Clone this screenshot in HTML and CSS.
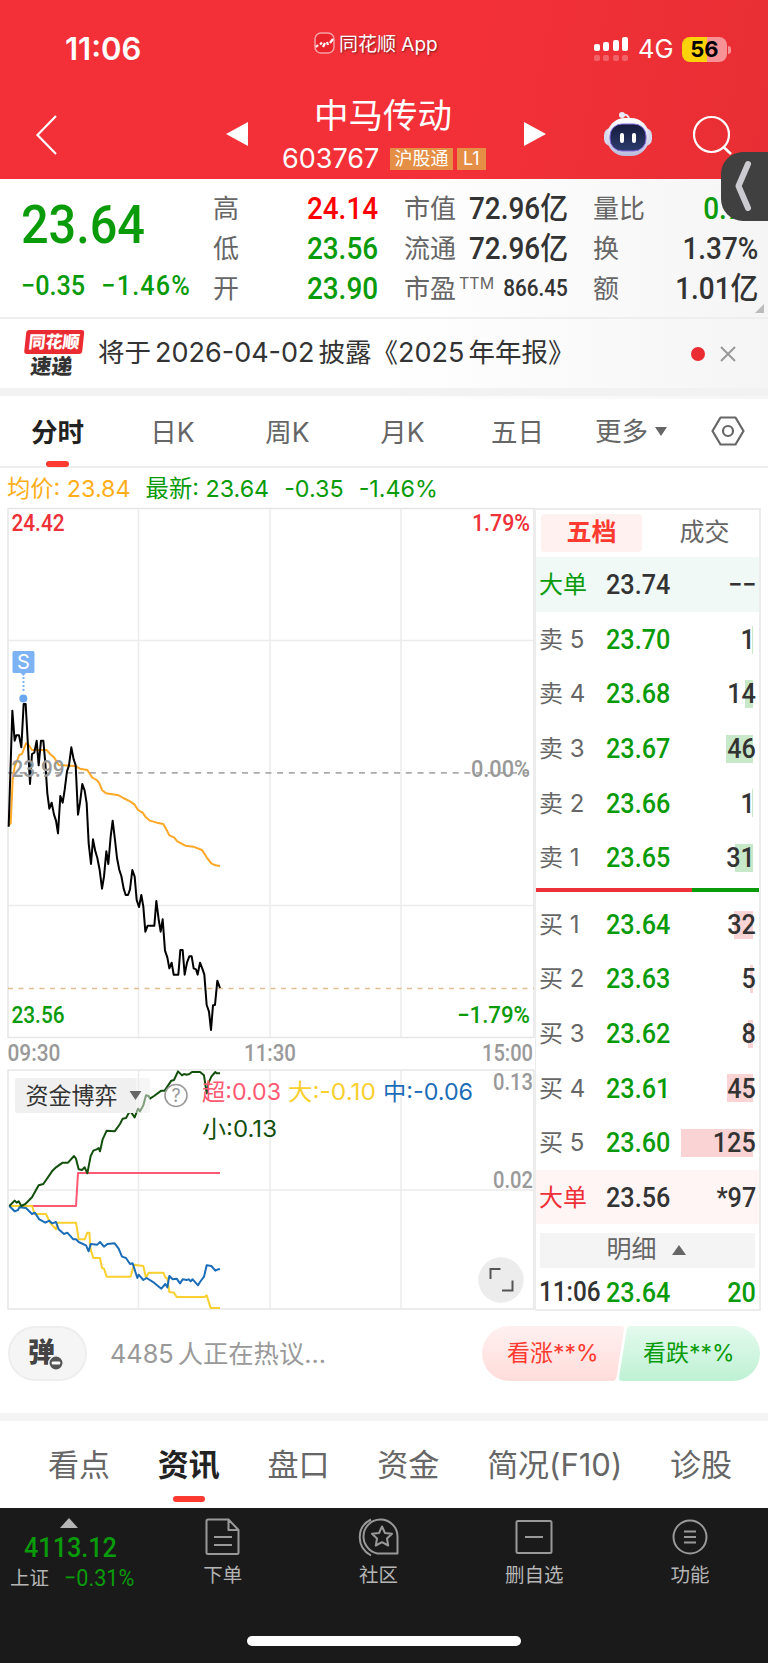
FILE: index.html
```html
<!DOCTYPE html>
<html lang="zh-CN">
<head>
    <meta charset="UTF-8">
    <title>中马传动 603767</title>
    <link rel="stylesheet" href="styles.css">
</head>
<body>
<div class="app">
    <!-- 顶部 -->
    <div class="header">
        <div class="status">
            <span class="time">11:06</span>
            <div class="brand">
                <svg width="21" height="22" viewBox="0 0 21 22"><rect x="1" y="1" width="19" height="20" rx="6" fill="#e8232b" stroke="#f6a0a3" stroke-width="1.5"/><path d="M2 15l2-2M6 12.500l2-2M9 15l2-4M13 10l1 3M16 11l3-4" stroke="#fff" stroke-width="2.200" fill="none"/></svg>
                <span>同花顺 App</span>
            </div>
            <div class="net">
                <svg width="35" height="26" viewBox="0 0 35 26">
                    <g fill="#fff"><rect x="0" y="8" width="6" height="7" rx="2"/><rect x="9" y="6" width="6" height="9" rx="2"/><rect x="19" y="4" width="6" height="11" rx="2"/><rect x="28" y="1" width="6" height="14" rx="2"/></g>
                    <g fill="#fff" opacity=".25"><rect x="0" y="19" width="6" height="6" rx="2"/><rect x="9" y="19" width="6" height="6" rx="2"/><rect x="19" y="19" width="6" height="6" rx="2"/><rect x="28" y="19" width="6" height="6" rx="2"/></g>
                </svg>
                <span class="g4">4G</span>
                <span class="battery">56</span>
            </div>
        </div>
        <div class="nav">
            <svg class="back" width="24" height="42" viewBox="0 0 24 42"><path d="M21 2L2.500 21L21 40" fill="none" stroke="#fff" stroke-width="2.200"/></svg>
            <i class="tri-left"></i>
            <div class="stock">
                <h1>中马传动</h1>
                <div class="code"><span>603767</span><b>沪股通</b><b>L1</b></div>
            </div>
            <i class="tri-right"></i>
            <svg class="robot" width="50" height="46" viewBox="0 0 50 46">
                <defs>
                    <linearGradient id="head" x1="0" y1="0" x2="0" y2="1"><stop offset="0" stop-color="#fff"/><stop offset="1" stop-color="#b9bddd"/></linearGradient>
                    <linearGradient id="face" x1="0" y1="0" x2="0" y2="1"><stop offset="0" stop-color="#141a3c"/><stop offset="1" stop-color="#2c3c6c"/></linearGradient>
                </defs>
                <path d="M20 4q6-1 6 5" fill="none" stroke="#e6e8f6" stroke-width="2"/>
                <circle cx="19" cy="4" r="3" fill="#e9eaf8"/>
                <rect x="1" y="17" width="48" height="18" rx="7" fill="#d5d8ee"/>
                <rect x="4" y="7" width="42" height="38" rx="18" fill="url(#head)"/>
                <rect x="7" y="13" width="36" height="27" rx="12" fill="url(#face)" stroke="#8a6be0" stroke-width="1"/>
                <rect x="17" y="22" width="4" height="10" rx="2" fill="#fff"/><rect x="29" y="22" width="4" height="10" rx="2" fill="#fff"/>
            </svg>
            <svg class="search" width="41" height="41" viewBox="0 0 41 41"><circle cx="19.500" cy="19.500" r="17.500" fill="none" stroke="#fff" stroke-width="2.200"/><path d="M31.500 32L39 39" stroke="#fff" stroke-width="2.600"/></svg>
        </div>
    </div>
    <div class="drawer"><svg width="47" height="69" viewBox="0 0 47 69"><path d="M27 12L17.500 34L27 56" fill="none" stroke="#cbcbd1" stroke-width="6" stroke-linecap="round" stroke-linejoin="round"/></svg></div>

    <!-- 行情 -->
    <div class="quote">
        <div class="price">
            <strong class="din">23.64</strong>
            <p class="din"><span>−0.35</span><span class="pct">−1.46%</span></p>
        </div>
        <dl class="c1">
            <dt>高</dt><dd class="din up">24.14</dd>
            <dt>低</dt><dd class="din down">23.56</dd>
            <dt>开</dt><dd class="din down">23.90</dd>
        </dl>
        <dl class="c2">
            <dt>市值</dt><dd class="din">72.96亿</dd>
            <dt>流通</dt><dd class="din">72.96亿</dd>
            <dt>市盈<sup>TTM</sup></dt><dd class="din small">866.45</dd>
        </dl>
        <dl class="c3">
            <dt>量比</dt><dd class="din down">0.78</dd>
            <dt>换</dt><dd class="din">1.37%</dd>
            <dt>额</dt><dd class="din">1.01亿</dd>
        </dl>
        <i class="corner"></i>
    </div>

    <!-- 速递 -->
    <div class="notice">
        <div class="badge"><em>同花顺</em><span>速递</span></div>
        <p>将于<span>2026-04-02</span>披露《<span class="y">2025</span>年年报》</p>
        <i class="dot"></i>
        <svg width="16" height="16" viewBox="0 0 16 16"><path d="M1 1L15 15M15 1L1 15" stroke="#999" stroke-width="2"/></svg>
    </div>

    <ul class="period">
        <li class="current">分时</li>
        <li>日K</li>
        <li>周K</li>
        <li>月K</li>
        <li>五日</li>
        <li class="more">更多<i></i></li>
        <li class="set"><svg width="34" height="30" viewBox="0 0 34 30"><path d="M9.500 1.500h15L32.500 15l-8 13.500h-15L1.500 15z" fill="none" stroke="#666" stroke-width="2.200" stroke-linejoin="round"/><circle cx="17" cy="15" r="5" fill="none" stroke="#666" stroke-width="2.200"/></svg></li>
    </ul>

    <div class="legend"><span class="avg">均价: 23.84</span><span class="last">最新: 23.64</span><span>-0.35</span><span>-1.46%</span></div>

    <div class="main">
        <!-- 分时图 -->
        <svg class="chart" width="535" height="803" viewBox="0 508 535 803">
            <g stroke="#ececec" stroke-width="1.500" fill="none">
                <path d="M8 640.500H534M8 905.500H534M138.500 509V1037M270 509V1037M401 509V1037"/>
                <path d="M8 1190H534M138.500 1070V1309M270 1070V1309M401 1070V1309"/>
                <path stroke="#e6e6e6" d="M8 508.500H534V1037.500H8zM8 1070H534V1309H8z"/>
            </g>
            <path d="M8 772.800H534" stroke="#aaa" stroke-width="1.800" stroke-dasharray="6 5.700"/>
            <path d="M8 988.600H534" stroke="#e2bd90" stroke-width="1.500" stroke-dasharray="5 5.500"/>
            <g transform="translate(0 500) scale(.33333)" fill="none" stroke-width="6" stroke-linejoin="round">
                <polyline stroke="#ffa726" points="26,976 32,970 38,840 44,800 58,765 66,762 78,730 86,735 96,750 140,750 150,762 162,772 176,795 225,798 240,806 262,810 276,832 290,840 298,850 306,870 318,880 356,886 370,894 390,904 404,914 414,930 428,938 436,950 450,962 470,968 490,972 500,990 508,1006 522,1012 532,1024 556,1037 580,1040 606,1050 620,1072 634,1090 646,1096 660,1098"/>
                <polyline stroke="#000" points="26,980 33,760 37,632 44,722 49,706 57,706 64,742 71,612 77,612 83,720 90,852 96,762 103,758 110,722 116,796 123,722 130,722 136,790 142,880 148,926 155,908 162,944 168,962 174,1000 181,888 188,908 194,870 201,814 207,796 214,742 221,778 227,796 234,944 240,908 247,852 254,872 260,910 266,1030 273,1092 279,1018 286,1054 292,1074 299,1110 306,1166 312,1130 319,1054 325,1092 332,1010 338,962 345,1020 351,1074 358,1110 364,1128 371,1166 377,1185 384,1185 390,1168 397,1110 404,1130 410,1200 417,1221 424,1185 430,1220 436,1295 443,1277 463,1277 469,1203 476,1258 482,1295 488,1258 495,1352 502,1372 508,1405 515,1388 521,1424 535,1424 541,1350 548,1350 554,1424 561,1388 568,1369 575,1369 581,1405 588,1408 593,1424 600,1388 607,1406 613,1424 620,1515 627,1535 633,1590 639,1516 645,1515 652,1442 660,1464"/>
            </g>
            <!-- 卖点标记 -->
            <path d="M14 651h19q1.500 0 1.500 1.500v19q0 1.500-1.500 1.500h-7l-2.700 3-2.700-3h-6.600q-1.500 0-1.500-1.500v-19q0-1.500 1.500-1.500z" fill="#7db3f5"/>
            <text x="23.500" y="669" text-anchor="middle" font-size="20" fill="#fff">S</text>
            <path d="M23.500 677v15" stroke="#7db3f5" stroke-width="2" stroke-dasharray="2 2"/>
            <circle cx="23.300" cy="698.500" r="4" fill="#6aa6f2"/>

            <g class="num" font-size="23">
                <text x="11.500" y="530.500" fill="#ee3038" textLength="53" lengthAdjust="spacingAndGlyphs">24.42</text>
                <text x="472" y="530.500" fill="#ee3038" textLength="58" lengthAdjust="spacingAndGlyphs">1.79%</text>
                <text x="11.500" y="776.500" fill="#999" textLength="53" lengthAdjust="spacingAndGlyphs">23.99</text>
                <text x="471" y="776.500" fill="#999" textLength="59" lengthAdjust="spacingAndGlyphs">0.00%</text>
                <text x="11.500" y="1023" fill="#0a9b0a" textLength="53" lengthAdjust="spacingAndGlyphs">23.56</text>
                <text x="457" y="1023" fill="#0a9b0a" textLength="73" lengthAdjust="spacingAndGlyphs">−1.79%</text>
            </g>
            <g class="num" font-size="23" fill="#999">
                <text x="7.500" y="1060.500" textLength="53" lengthAdjust="spacingAndGlyphs">09:30</text>
                <text x="244" y="1060.500" textLength="52" lengthAdjust="spacingAndGlyphs">11:30</text>
                <text x="482" y="1060.500" textLength="51" lengthAdjust="spacingAndGlyphs">15:00</text>
                <text x="493" y="1089.500" textLength="40" lengthAdjust="spacingAndGlyphs">0.13</text>
                <text x="493" y="1188" textLength="40" lengthAdjust="spacingAndGlyphs">0.02</text>
            </g>

            <!-- 资金博弈 -->
            <g transform="translate(0 1030) scale(.33333)" fill="none" stroke-width="6" stroke-linejoin="round">
                <polyline stroke="#ff5a73" points="28,528 228,528 234,429 660,429"/>
                <polyline stroke="#f9d02f" points="28,528 96,528 104,552 138,552 150,578 168,598 172,578 228,578 236,628 254,628 262,608 268,608 272,658 280,684 300,684 306,714 312,716 320,740 392,740 402,704 430,708 438,744 446,728 490,728 496,742 502,746 508,786 522,788 530,801 614,801 620,796 632,834 660,834"/>
                <polyline stroke="#1b6db8" points="28,528 44,544 54,540 58,532 78,534 96,552 104,548 118,568 136,578 148,572 156,580 168,576 176,598 192,612 202,608 220,628 228,628 236,636 258,646 266,664 272,642 292,644 300,636 312,650 322,642 344,640 356,656 366,680 378,684 390,702 398,700 412,744 416,734 430,750 440,744 462,758 484,776 496,762 502,772 508,738 518,748 530,746 540,760 548,748 560,750 566,748 572,754 578,748 594,766 600,756 612,740 620,706 634,708 646,722 654,718 660,718"/>
                <polyline stroke="#124f0c" points="28,528 44,512 50,518 56,514 64,528 76,522 96,502 116,466 130,462 156,424 168,412 188,398 204,398 222,378 228,386 236,418 246,420 254,412 262,430 272,378 280,362 290,358 296,354 300,364 308,328 320,302 344,304 360,282 368,266 378,264 388,246 394,248 404,262 410,246 414,236 420,244 430,226 438,196 446,198 450,206 462,198 484,182 494,182 506,164 514,152 522,150 534,124 546,136 552,132 560,134 568,132 576,126 600,126 612,136 620,190 626,158 634,140 646,126 650,130 660,130"/>
            </g>
            <rect x="15" y="1078" width="135" height="35" rx="3" fill="#eee" fill-opacity=".5"/>
            <rect x="15" y="1078" width="121" height="35" rx="3" fill="#f0f0f0"/>
            <text x="25.500" y="1104" font-size="23" fill="#333" textLength="92" lengthAdjust="spacingAndGlyphs">资金博弈</text>
            <path d="M129.500 1091h12l-6 9z" fill="#666"/>
            <circle cx="176" cy="1095.500" r="11" fill="#fff" fill-opacity=".5" stroke="#999" stroke-width="1.600"/>
            <text x="176" y="1102" font-size="18" fill="#999" text-anchor="middle">?</text>
            <g font-size="23">
                <text x="202" y="1100" fill="#ff5a73" textLength="79" lengthAdjust="spacingAndGlyphs">超:0.03</text>
                <text x="288" y="1100" fill="#f9d02f" textLength="88" lengthAdjust="spacingAndGlyphs">大:-0.10</text>
                <text x="383" y="1100" fill="#1b6db8" textLength="90" lengthAdjust="spacingAndGlyphs">中:-0.06</text>
                <text x="202" y="1137" fill="#124f0c" textLength="75" lengthAdjust="spacingAndGlyphs">小:0.13</text>
            </g>
            <circle cx="501" cy="1280" r="22.700" fill="#ececec"/>
            <path d="M490.500 1279v-10h10M502 1290.500h10.500v-10" fill="none" stroke="#555" stroke-width="2"/>
        </svg>

        <!-- 五档 -->
        <div class="depth">
            <div class="tabs"><span class="on">五档</span><span>成交</span></div>
            <div class="row big sell"><span>大单</span><b class="din">23.74</b><em class="din">−−</em></div>
            <div class="row sell"><span>卖 5</span><b class="din">23.70</b><i style="width:1px"></i><em class="din one">1</em></div>
            <div class="row sell"><span>卖 4</span><b class="din">23.68</b><i style="width:8px"></i><em class="din">14</em></div>
            <div class="row sell"><span>卖 3</span><b class="din">23.67</b><i style="width:27px"></i><em class="din">46</em></div>
            <div class="row sell"><span>卖 2</span><b class="din">23.66</b><i style="width:1px"></i><em class="din one">1</em></div>
            <div class="row sell"><span>卖 1</span><b class="din">23.65</b><i style="width:18px"></i><em class="din one">31</em></div>
            <div class="ratio"><i style="width:70%"></i></div>
            <div class="row buy"><span>买 1</span><b class="din">23.64</b><i style="width:19px"></i><em class="din">32</em></div>
            <div class="row buy"><span>买 2</span><b class="din">23.63</b><i style="width:3px"></i><em class="din">5</em></div>
            <div class="row buy"><span>买 3</span><b class="din">23.62</b><i style="width:5px"></i><em class="din">8</em></div>
            <div class="row buy"><span>买 4</span><b class="din">23.61</b><i style="width:26px"></i><em class="din">45</em></div>
            <div class="row buy"><span>买 5</span><b class="din">23.60</b><i style="width:72px"></i><em class="din">125</em></div>
            <div class="row big buy"><span>大单</span><b class="din">23.56</b><em class="din">*97</em></div>
            <div class="detail">明细<i></i></div>
            <div class="row tick"><span class="din">11:06</span><b class="din">23.64</b><em class="din">20</em></div>
        </div>
    </div>

    <!-- 热议 -->
    <div class="talk">
        <div class="dan">弹<svg width="16" height="16" viewBox="0 0 15 15"><circle cx="7.500" cy="7.500" r="6.700" fill="#555" stroke="#f4f4f4" stroke-width="1.200"/><rect x="3.500" y="6" width="8" height="3" rx="1" fill="#fff"/></svg></div>
        <p><span>4485</span>人正在热议...</p>
        <div class="vote">
            <svg width="278" height="55" viewBox="0 0 278 55">
                <defs>
                    <linearGradient id="red" x1="0" y1="0" x2="0" y2="1"><stop offset="0" stop-color="#fff0f0"/><stop offset="1" stop-color="#ffdddb"/></linearGradient>
                    <linearGradient id="green" x1="0" y1="0" x2="0" y2="1"><stop offset="0" stop-color="#e4faed"/><stop offset="1" stop-color="#bef1d4"/></linearGradient>
                </defs>
                <path d="M27.500 0H139q3.500 0 3 4l-7.500 47q-.6 4-4 4H27.500a27.500 27.500 0 010-55z" fill="url(#red)"/>
                <path d="M149 0h101.500a27.500 27.500 0 010 55H140.500q-4 0-3.400-4L144.600 4q.6-4 4.400-4z" fill="url(#green)"/>
            </svg>
            <span class="rise">看涨**%</span><span class="fall">看跌**%</span>
        </div>
    </div>

    <ul class="info">
        <li>看点</li>
        <li class="current">资讯</li>
        <li>盘口</li>
        <li>资金</li>
        <li>简况(F10)</li>
        <li>诊股</li>
    </ul>

    <!-- 底部 -->
    <div class="footer">
        <div class="index">
            <i></i>
            <strong class="din">4113.12</strong>
            <p><span>上证</span><span class="din">−0.31%</span></p>
        </div>
        <div class="item">
            <svg width="36" height="38" viewBox="0 0 36 38"><path d="M3 1.500h20.500L33.500 12v22.500q0 1.500-1.500 1.500H3q-1.500 0-1.500-1.500V3q0-1.500 1.500-1.500zM23.500 2v10h10M9 19h18M9 27h18"/></svg>
            <span>下单</span>
        </div>
        <div class="item">
            <svg width="42" height="40" viewBox="0 0 42 40"><path d="M39.500 36.500H24A17 17 0 1139.500 20zM13 2.500C-2 10-2 30 13 38.500M24 9.500l3 6.500 7 .8-5 4.700 1.200 7L24 25.200l-6.200 3.300 1.200-7-5-4.700 7-.8z"/></svg>
            <span>社区</span>
        </div>
        <div class="item">
            <svg width="38" height="36" viewBox="0 0 38 36"><rect x="1.500" y="2" width="35" height="32" rx="1.500"/><path d="M10 18h18"/></svg>
            <span>删自选</span>
        </div>
        <div class="item">
            <svg width="36" height="36" viewBox="0 0 36 36"><circle cx="18" cy="18" r="16.500"/><path d="M12 12.500h12M12 18h12M12 23.500h12"/></svg>
            <span>功能</span>
        </div>
        <div class="home"></div>
    </div>
</div>
</body>
</html>
```
FILE: styles.css
```css
* {
    padding: 0;
    margin: 0;
    list-style: none;
    box-sizing: border-box;
}

body {
    width: 768px;
    background: #fff;
    font-family: Inter, "Noto Sans CJK SC", sans-serif;
    color: #333;
    white-space: nowrap;
}

i, em {
    font-style: normal;
}

svg {
    display: block;
    flex: none;
    overflow: visible;
}

.app {
    position: relative;
    width: 768px;
    height: 1663px;
    overflow: hidden;
    background: linear-gradient(90deg, #fff 50%, #f5f5f5 100%) 0 179px / 768px 220px no-repeat #fff;
}

/* 窄体数字 */
.din {
    display: inline-block;
    font-family: Roboto, "Noto Sans CJK SC", sans-serif;
    font-weight: 500;
    transform: scaleX(.9);
    transform-origin: 0 50%;
}

.up {
    color: #f00;
}

.down {
    color: #0a9b0a;
}

/* header */
.header {
    height: 179px;
    background: linear-gradient(100deg, #f33038 60%, #e82e34);
    color: #fff;
}

.status {
    display: flex;
    height: 92px;
    padding: 0 41px 0 65px;
    justify-content: space-between;
}

.time {
    width: 249px;
    padding-top: 31px;
    font-size: 31px;
    font-weight: 600;
    line-height: 36px;
}

.brand {
    display: flex;
    gap: 4px;
    height: 24px;
    margin-top: 32px;
    flex: 1;
    font-size: 19px;
    line-height: 26px;
    text-shadow: 1px 1px 2px rgba(0, 0, 0, .5);
}

.net {
    display: flex;
    align-items: center;
    height: 28px;
    margin-top: 35px;
}

.g4 {
    width: 44px;
    margin-left: 9px;
    font-size: 25.500px;
    line-height: 28px;
}

.battery {
    position: relative;
    width: 45px;
    height: 25px;
    border-radius: 8px;
    background: linear-gradient(90deg, #fbd30a 56%, #f79297 56%);
    color: #000;
    font-size: 22px;
    font-weight: 700;
    line-height: 25px;
    text-align: center;
}

.battery:after {
    content: "";
    position: absolute;
    right: -4px;
    top: 9px;
    width: 3px;
    height: 8px;
    border-radius: 0 3px 3px 0;
    background: #f79297;
}

.nav {
    display: flex;
    height: 87px;
    padding-left: 35px;
}

.back {
    margin-top: 22px;
}

.tri-left, .tri-right {
    width: 0;
    height: 0;
    margin-top: 30px;
    border: 12px solid transparent;
    border-width: 12.500px 0;
}

.tri-left {
    margin-left: 167px;
    border-right: 22px solid #fff;
}

.tri-right {
    margin-left: 35px;
    border-left: 22px solid #fff;
}

.stock {
    width: 207px;
    margin-left: 34px;
}

.stock h1 {
    margin-left: 32px;
    height: 53px;
    font-size: 34.500px;
    font-weight: 400;
    line-height: 47px;
}

.code {
    display: flex;
    align-items: center;
    height: 28px;
    font-size: 27px;
}

.code span {
    flex: none;
    width: 108px;
    height: 28px;
    line-height: 27px;
}

.code b {
    flex: none;
    height: 22px;
    margin-right: 4px;
    padding: 0 4.500px;
    background: #e58e45;
    font-size: 18px;
    font-weight: 400;
    line-height: 21px;
}

.code b:last-child {
    padding: 0 6px;
}

.robot {
    margin: 19px 0 0 57px;
}

.search {
    margin: 23px 0 0 39px;
}

.drawer {
    position: absolute;
    right: 0;
    top: 152px;
    z-index: 2;
    width: 47px;
    height: 69px;
    border-radius: 22px 0 0 22px;
    background: #404040;
}

/* quote */
.quote {
    position: relative;
    display: flex;
    height: 140px;
    padding-top: 9px;
    border-bottom: 2px solid #eee;
}

.price {
    width: 213px;
    padding-left: 21px;
    color: #0a9b0a;
}

.price strong {
    display: block;
    height: 72px;
    font-size: 54px;
    font-weight: 500;
    line-height: 74px;
}

.price p {
    display: block;
    font-size: 28px;
    line-height: 52px;
}

.price p span {
    margin-right: 18px;
}

.price p .pct {
    margin-right: 0;
    letter-spacing: 1.300px;
}

.quote dl {
    display: grid;
    grid-template-columns: 52px 1fr;
    grid-auto-rows: 40px;
    line-height: 41px;
}

.quote dt {
    color: #666;
    font-size: 26px;
}

.quote dt sup {
    display: inline-block;
    margin-left: 3px;
    font-size: 16px;
    line-height: 16px;
    vertical-align: 9px;
}

.quote dd {
    justify-self: end;
    font-size: 31px;
    transform-origin: 100% 50%;
}

.quote dd.small {
    font-size: 23px;
}

.c1 {
    width: 165px;
}

.c2 {
    width: 164px;
    margin-left: 26px;
}

.c3 {
    width: 165px;
    margin-left: 25px;
}

.corner {
    position: absolute;
    right: 4px;
    bottom: 4px;
    border-bottom: 9px solid #bbb;
    border-left: 9px solid transparent;
}

/* notice */
.notice {
    display: flex;
    align-items: center;
    height: 77px;
    padding: 0 32px 0 24px;
    border-bottom: 8px solid #f2f2f2;
}

.badge {
    width: 58px;
    height: 47px;
    font-size: 19px;
    font-weight: 900;
    line-height: 24px;
    text-align: center;
    transform: skewX(-6deg);
}

.badge em {
    display: block;
    height: 24px;
    border-radius: 3px;
    background: #ea2b31;
    color: #fff;
    font-size: 17px;
}

.badge span {
    font-size: 21px;
    line-height: 25px;
}

.notice p {
    flex: 1;
    margin-left: 16px;
    padding-bottom: 2px;
    font-size: 26.500px;
    line-height: 38px;
}

.notice p span {
    margin: 0 4px;
    font-size: 27px;
}

.notice p .y {
    margin-left: 0;
}

.dot {
    width: 14px;
    height: 14px;
    margin-right: 15px;
    border-radius: 50%;
    background: #ea2b31;
}

/* period */
.period {
    display: flex;
    height: 72px;
    border-bottom: 2px solid #eee;
    color: #666;
    font-size: 26.500px;
    line-height: 73px;
    text-align: center;
}

.period li {
    position: relative;
    width: 115px;
    height: 71px;
}

.period .current, .info .current {
    color: #222;
    font-weight: 700;
}

.current:after {
    content: "";
    position: absolute;
    left: 46px;
    bottom: 0;
    width: 23px;
    height: 6px;
    border-radius: 3px;
    background: #ff3a30;
}

.period .more {
    display: flex;
    align-items: center;
    gap: 7px;
    padding-left: 20px;
}

.more i {
    border-top: 9px solid #666;
    border-left: 6.500px solid transparent;
    border-right: 6.500px solid transparent;
}

.period .set {
    width: 34px;
    margin-left: 21px;
    padding-top: 20px;
}

.legend {
    display: flex;
    gap: 15px;
    height: 40px;
    padding-left: 7px;
    color: #0a9b0a;
    font-size: 23.300px;
    line-height: 41px;
}

.avg {
    color: #ffae1a;
}

.main {
    display: flex;
    height: 803px;
}

.chart .num {
    font-family: Roboto, sans-serif;
    font-weight: 500;
}

/* depth */
.depth {
    width: 226px;
    border: 2px solid #ececec;
    border-left-width: 1px;
}

.tabs {
    display: flex;
    height: 47px;
    padding: 4px 0 0 5px;
    font-size: 25px;
    line-height: 37px;
    text-align: center;
}

.tabs span {
    flex: none;
    width: 101px;
    height: 38px;
    margin-right: 12px;
    border-radius: 4px;
    color: #666;
}

.tabs .on {
    background: #fff1f0;
    color: #ff3a30;
    font-weight: 700;
}

.row {
    position: relative;
    display: flex;
    align-items: center;
    height: 54.600px;
    padding: 0 3px;
    font-size: 24px;
    line-height: 55px;
}

.row span {
    width: 67px;
    height: 54px;
    color: #666;
}

.row b {
    height: 54px;
    color: #0a9b0a;
    font-size: 28px;
}

.row em {
    position: relative;
    height: 54px;
    margin-left: auto;
    color: #333;
    font-size: 28px;
    transform-origin: 100% 50%;
}

.row .one {
    margin-right: 1px;
}

.row i {
    position: absolute;
    right: 6px;
    top: 14px;
    height: 28px;
    background: #c8e9c9;
}

.buy i {
    background: #fad3d4;
}

.big b {
    color: #333;
}

.big.sell {
    background: #f0f9f5;
}

.big.sell span {
    color: #0a9b0a;
}

.big.buy {
    background: #fff5f5;
}

.big.buy span {
    color: #ee3038;
}

.ratio {
    height: 12px;
    border: solid #fff;
    border-width: 3px 0 5px;
    background: #0a9b0a;
}

.ratio i {
    display: block;
    height: 4px;
    background: #ee3038;
}

.detail {
    display: flex;
    align-items: center;
    justify-content: center;
    gap: 15px;
    height: 35px;
    margin: 9px 4px 0;
    background: #f4f4f4;
    color: #666;
    font-size: 25px;
    line-height: 33px;
    padding: 0 3px 2px 0;
}

.detail i {
    border-bottom: 10px solid #666;
    border-left: 7px solid transparent;
    border-right: 7px solid transparent;
}

.row.tick {
    height: 48px;
}

.row.tick span {
    color: #333;
    font-size: 27px;
}

.row.tick em {
    color: #0a9b0a;
}

/* talk */
.talk {
    display: flex;
    height: 110px;
    padding: 15px 8px 0;
    border-bottom: 8px solid #f4f4f4;
}

.dan {
    position: relative;
    width: 79px;
    height: 55px;
    border: 2px solid #eee;
    border-radius: 28px;
    background: #f5f5f5;
    color: #444;
    font-size: 27px;
    font-weight: 900;
    line-height: 49px;
    padding-left: 18px;
}

.dan svg {
    position: absolute;
    left: 38px;
    top: 27px;
}

.talk p {
    margin-left: 23px;
    color: #999;
    font-size: 25.300px;
    line-height: 56px;
}

.talk p span {
    margin-right: 4px;
}

.vote {
    position: relative;
    width: 278px;
    height: 55px;
    margin-left: auto;
    font-size: 23px;
    line-height: 55px;
}

.vote span {
    position: absolute;
    left: 25px;
    top: 0;
    color: #ff3a30;
}

.vote .fall {
    left: 161px;
    color: #0a9b0a;
}

/* info */
.info {
    display: flex;
    justify-content: space-between;
    height: 87px;
    padding: 0 36px 0 48px;
    color: #666;
    font-size: 31px;
    line-height: 88px;
}

.info li {
    position: relative;
}

.info .current:after {
    left: 15px;
    bottom: 6px;
    width: 32px;
}

/* footer */
.footer {
    position: relative;
    display: flex;
    height: 155px;
    background: #1a1a1a;
    color: #b5b5b5;
    font-size: 19.500px;
}

.index {
    width: 145px;
    padding: 10px 0 0 10px;
    line-height: 28px;
}

.index i {
    display: block;
    width: 0;
    margin-left: 50px;
    border-bottom: 10px solid #b5b5b5;
    border-left: 9px solid transparent;
    border-right: 9px solid transparent;
}

.index strong {
    display: block;
    margin: 6px 0 2px 14px;
    color: #0a9b0a;
    font-size: 28px;
}

.index p {
    display: flex;
    gap: 15px;
}

.index p .din {
    color: #0a9b0a;
    font-size: 24px;
    font-weight: 400;
}

.item {
    width: 156px;
    display: flex;
    flex-direction: column;
    align-items: center;
}

.item svg {
    height: 40px;
    margin: 9px 0 4px;
    fill: none;
    stroke: #999;
    stroke-width: 2;
    stroke-linejoin: round;
}

.item span {
    line-height: 28px;
}

.home {
    position: absolute;
    left: 247px;
    bottom: 17px;
    width: 274px;
    height: 10px;
    border-radius: 5px;
    background: #fff;
}
```
